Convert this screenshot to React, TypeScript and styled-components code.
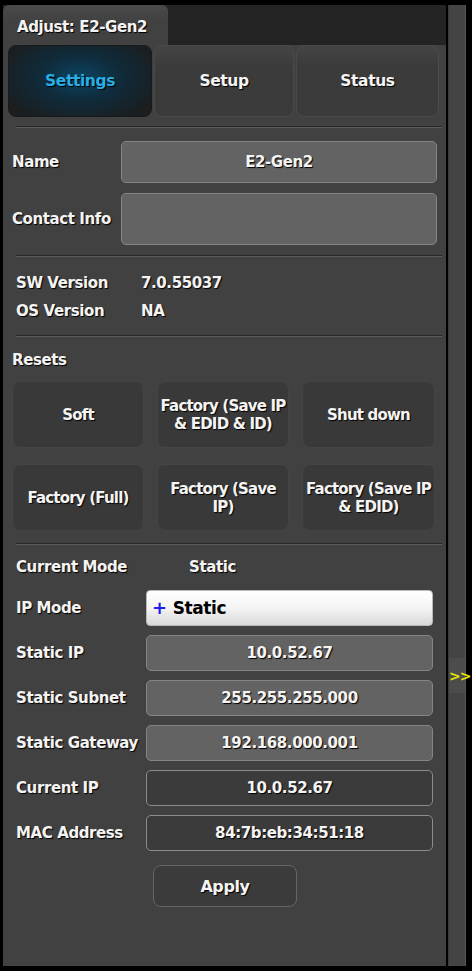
import React from "react";
import styled, { createGlobalStyle } from "styled-components";

const GlobalStyle = createGlobalStyle`
  html, body {
    margin: 0;
    padding: 0;
    background: #000;
  }
  body {
    font-family: "DejaVu Sans", "Liberation Sans", sans-serif;
    font-weight: bold;
    font-size: 15px;
    letter-spacing: -0.4px;
    color: #f4f4f4;
  }
  * {
    box-sizing: border-box;
  }
`;

const Page = styled.div`
  display: flex;
  width: 472px;
  height: 971px;
  padding: 5px 6px 5px 3px;
  gap: 2px;
`;

const LeftColumn = styled.div`
  display: flex;
  flex-direction: column;
  width: 443px;
`;

const HeaderBar = styled.div`
  display: flex;
  height: 40px;
  background: #242424;
`;

const HeaderTab = styled.div`
  display: flex;
  align-items: center;
  width: 165px;
  padding-left: 14px;
  padding-top: 4px;
  background: linear-gradient(#4a4a4a, #414141 40%, #414141);
  border-radius: 6px 6px 0 0;
  text-shadow: 1px 1px 1px #000;
`;

const Panel = styled.div`
  flex: 1;
  display: flex;
  flex-direction: column;
  background: #414141;
`;

const SegTabs = styled.div`
  display: grid;
  grid-template-columns: 144px 140px 143px;
  column-gap: 2px;
  height: 72px;
  padding: 0 6px 0 5px;
`;

const SegTab = styled.div<{ active?: boolean }>`
  display: flex;
  align-items: center;
  justify-content: center;
  border-radius: 8px;
  font-size: 15.5px;
  text-shadow: 1px 1px 1px #000;
  color: ${({ active }) => (active ? "#2aaee6" : "#f4f4f4")};
  background: ${({ active }) =>
    active
      ? "radial-gradient(ellipse 60% 70% at 50% 45%, #0d4563 0%, #0f2c3c 45%, #1b1d1f 100%)"
      : "linear-gradient(#444, #3b3b3b 30%, #3b3b3b)"};
  border: 1px solid ${({ active }) => (active ? "#1a1a1a" : "#4a4a4a")};
`;

const Divider = styled.div<{ top: number }>`
  margin: ${({ top }) => top}px 4px 0 13px;
  height: 2px;
  border-top: 1px solid #272727;
  border-bottom: 1px solid #5c5c5c;
`;

const InfoRow = styled.div<{ height: number; top?: number }>`
  display: grid;
  grid-template-columns: 109px 316px;
  align-items: center;
  height: ${({ height }) => height}px;
  margin-top: ${({ top = 0 }) => top}px;
  padding-left: 9px;
`;

const Label = styled.span`
  text-shadow: 1px 1px 1px #000;
  white-space: nowrap;
`;

const ValueBox = styled.div<{ variant?: "filled" | "dark" }>`
  display: flex;
  align-items: center;
  justify-content: center;
  height: 100%;
  border-radius: 5px;
  text-shadow: 1px 1px 1px #000;
  background: ${({ variant }) => (variant === "dark" ? "#3b3b3b" : "#636363")};
  border: 1px solid ${({ variant }) => (variant === "dark" ? "#8c8c8c" : "#858585")};
`;

const VersionBlock = styled.div`
  display: flex;
  flex-direction: column;
  margin-top: 12px;
  padding-left: 13px;
`;

const VersionRow = styled.div`
  display: grid;
  grid-template-columns: 125px 1fr;
  align-items: center;
  height: 28px;
  text-shadow: 1px 1px 1px #000;
`;

const SectionTitle = styled.div`
  display: flex;
  align-items: center;
  height: 20px;
  margin-top: 13px;
  padding-left: 9px;
  text-shadow: 1px 1px 1px #000;
`;

const ResetGrid = styled.div`
  display: grid;
  grid-template-columns: 132px 132px 133px;
  grid-auto-rows: 67px;
  column-gap: 13px;
  row-gap: 16px;
  margin-top: 11px;
  padding-left: 9px;
`;

const ResetButton = styled.div`
  display: flex;
  align-items: center;
  justify-content: center;
  text-align: center;
  padding: 0;
  line-height: 18px;
  letter-spacing: -0.8px;
  border-radius: 8px;
  background: #393939;
  border: 1px solid #454545;
  text-shadow: 1px 1px 1px #000;
`;

const FieldList = styled.div`
  display: flex;
  flex-direction: column;
  gap: 9px;
  margin-top: 13px;
  padding-left: 13px;
`;

const FieldRow = styled.div`
  display: grid;
  grid-template-columns: 130px 287px;
  align-items: center;
  height: 36px;
`;

const ModeRow = styled.div`
  display: grid;
  grid-template-columns: 173px 1fr;
  align-items: center;
  height: 20px;
  margin-top: 12px;
  padding-left: 13px;
  text-shadow: 1px 1px 1px #000;
`;

const Dropdown = styled.div`
  display: flex;
  align-items: center;
  gap: 6px;
  height: 100%;
  padding-left: 5px;
  border-radius: 4px;
  background: linear-gradient(#ffffff, #f4f4f4 50%, #d9d9d9);
  border: 1px solid #b8b8b8;
  color: #000;
  font-size: 17px;
`;

const Plus = styled.span`
  color: #1d1df0;
  font-size: 18px;
  line-height: 1;
`;

const ApplyButton = styled.div`
  display: flex;
  align-items: center;
  justify-content: center;
  width: 144px;
  height: 42px;
  margin: 14px 0 0 150px;
  border-radius: 8px;
  border: 1px solid #666;
  background: #3b3b3b;
  font-size: 16px;
  text-shadow: 1px 1px 1px #000;
`;

const SideStrip = styled.div`
  display: flex;
  flex-direction: column;
  width: 18px;
  background: #444;
  border-left: 1px solid #3a3a3a;
  border-right: 1px solid #565656;
`;

const ExpandHandle = styled.div`
  display: flex;
  align-items: center;
  justify-content: flex-start;
  height: 35px;
  margin-top: 653px;
  background: #4c4c4c;
  color: #e6e600;
  font-size: 14px;
  letter-spacing: -1px;
`;

const fields = [
  { label: "Static IP", value: "10.0.52.67", variant: "filled" as const },
  { label: "Static Subnet", value: "255.255.255.000", variant: "filled" as const },
  { label: "Static Gateway", value: "192.168.000.001", variant: "filled" as const },
  { label: "Current IP", value: "10.0.52.67", variant: "dark" as const },
  { label: "MAC Address", value: "84:7b:eb:34:51:18", variant: "dark" as const },
];

const resets = [
  "Soft",
  "Factory (Save IP & EDID & ID)",
  "Shut down",
  "Factory (Full)",
  "Factory (Save IP)",
  "Factory (Save IP & EDID)",
];

export default function App() {
  return (
    <>
      <GlobalStyle />
      <Page>
        <LeftColumn>
          <HeaderBar>
            <HeaderTab>Adjust: E2-Gen2</HeaderTab>
          </HeaderBar>
          <Panel>
            <SegTabs>
              <SegTab active>Settings</SegTab>
              <SegTab>Setup</SegTab>
              <SegTab>Status</SegTab>
            </SegTabs>

            <Divider top={9} />

            <InfoRow height={42} top={13}>
              <Label>Name</Label>
              <ValueBox>E2-Gen2</ValueBox>
            </InfoRow>
            <InfoRow height={52} top={10}>
              <Label>Contact Info</Label>
              <ValueBox />
            </InfoRow>

            <Divider top={10} />

            <VersionBlock>
              <VersionRow>
                <span>SW Version</span>
                <span>7.0.55037</span>
              </VersionRow>
              <VersionRow>
                <span>OS Version</span>
                <span>NA</span>
              </VersionRow>
            </VersionBlock>

            <Divider top={10} />

            <SectionTitle>Resets</SectionTitle>
            <ResetGrid>
              {resets.map((r) => (
                <ResetButton key={r}>{r}</ResetButton>
              ))}
            </ResetGrid>

            <Divider top={12} />

            <ModeRow>
              <span>Current Mode</span>
              <span>Static</span>
            </ModeRow>

            <FieldList>
              <FieldRow>
                <Label>IP Mode</Label>
                <Dropdown>
                  <Plus>+</Plus>
                  <span>Static</span>
                </Dropdown>
              </FieldRow>
              {fields.map((f) => (
                <FieldRow key={f.label}>
                  <Label>{f.label}</Label>
                  <ValueBox variant={f.variant}>{f.value}</ValueBox>
                </FieldRow>
              ))}
            </FieldList>

            <ApplyButton>Apply</ApplyButton>
          </Panel>
        </LeftColumn>
        <SideStrip>
          <ExpandHandle>&gt;&gt;</ExpandHandle>
        </SideStrip>
      </Page>
    </>
  );
}
